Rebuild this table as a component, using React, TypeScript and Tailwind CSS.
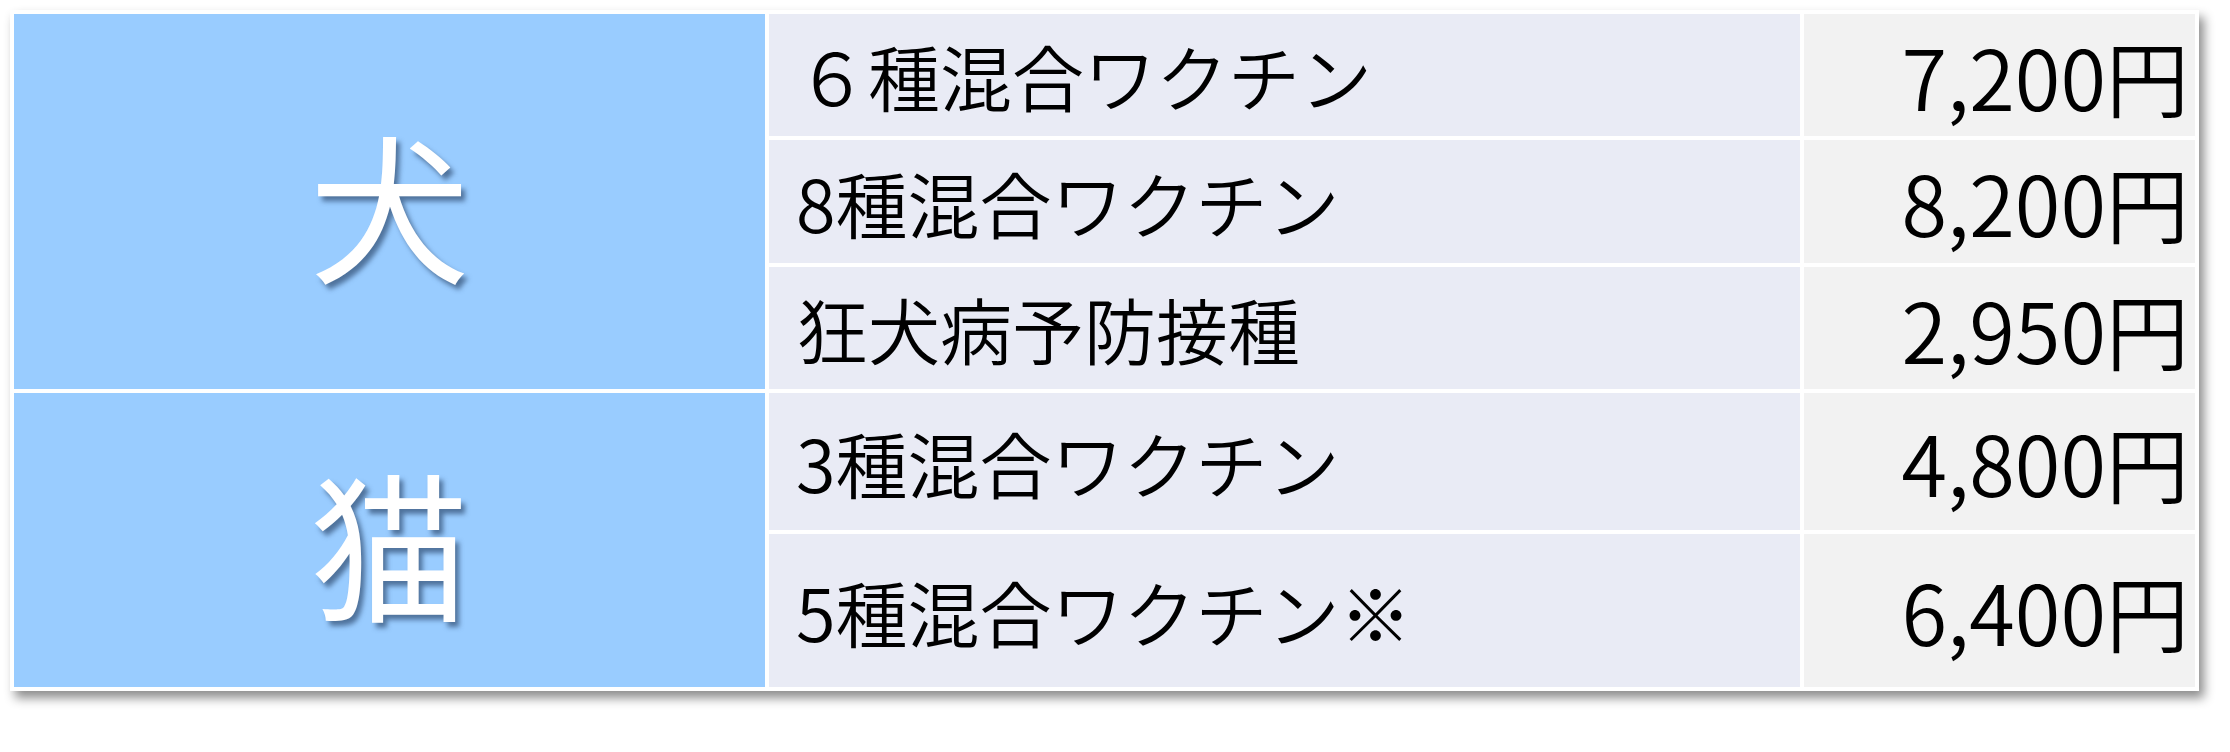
import React from 'react';

type Row = { name: string; price: string; h: string };

const rows: Row[] = [
  { name: '６種混合ワクチン', price: '7,200円', h: 'h-[122px]' },
  { name: '8種混合ワクチン', price: '8,200円', h: 'h-[123px]' },
  { name: '狂犬病予防接種', price: '2,950円', h: 'h-[122px]' },
  { name: '3種混合ワクチン', price: '4,800円', h: 'h-[137px]' },
  { name: '5種混合ワクチン※', price: '6,400円', h: 'h-[153px]' },
];

const jp = "font-['Noto_Sans_CJK_JP','Noto_Sans',sans-serif]";

const Animal: React.FC<{ label: string; span: string }> = ({ label, span }) => (
  <div
    className={`${span} col-start-1 bg-[#99ccff] flex items-center justify-center text-white text-[160px] leading-none ${jp} [text-shadow:4px_5px_5px_rgba(30,55,90,0.6)]`}
  >
    {label}
  </div>
);

const App: React.FC = () => {
  return (
    <div className="min-h-screen bg-white p-[10px]">
      <div className="w-fit bg-white p-[4px] shadow-[5px_7px_10px_rgba(0,0,0,0.45)]">
        <div className="grid grid-cols-[751px_1031px_391px] gap-[4px]">
          <Animal label="犬" span="row-start-1 row-span-3" />
          <Animal label="猫" span="row-start-4 row-span-2" />
          {rows.map((r, i) => (
            <React.Fragment key={r.name}>
              <div
                style={{ gridRow: i + 1 }}
                className={`${r.h} col-start-2 bg-[#e9ebf5] flex items-center pl-[27px] text-[72px] font-[350] leading-none text-black ${jp}`}
              >
                {r.name}
              </div>
              <div
                style={{ gridRow: i + 1 }}
                className={`${r.h} col-start-3 bg-[#f2f2f2] flex items-center justify-end pr-[6px] text-[83px] font-[350] leading-none text-black ${jp}`}
              >
                {r.price}
              </div>
            </React.Fragment>
          ))}
        </div>
      </div>
    </div>
  );
};

export default App;
